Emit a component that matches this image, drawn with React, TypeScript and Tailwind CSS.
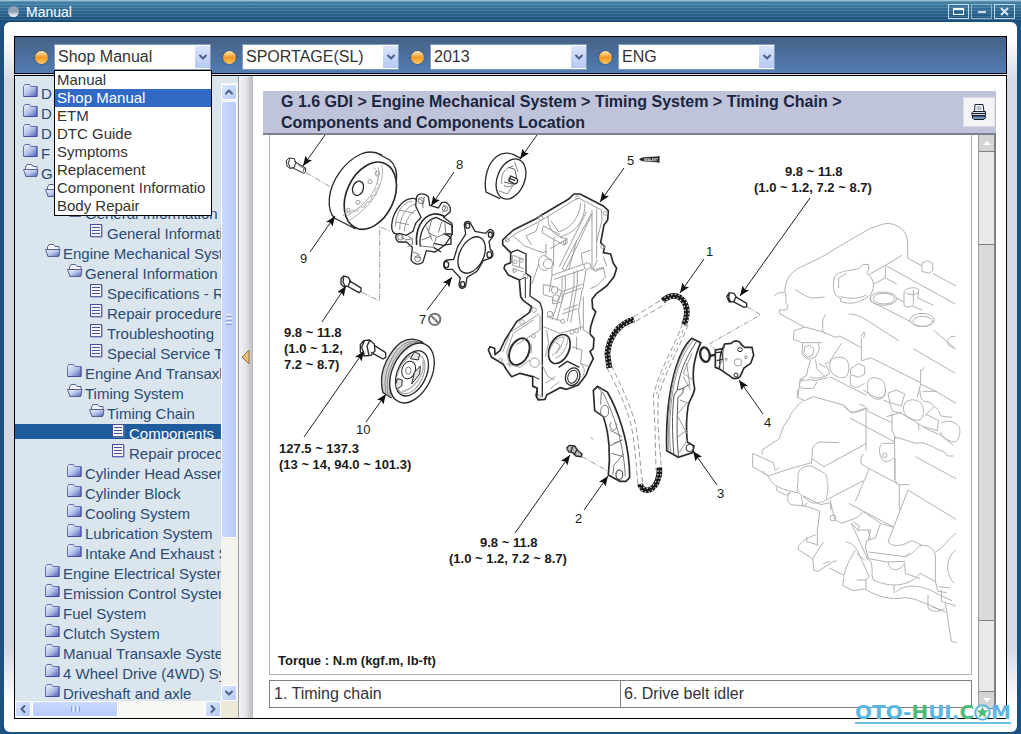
import { useState, type ReactNode } from "react";
import { ChevronDown, ChevronLeft, ChevronRight, ChevronUp } from "lucide-react";

type NodeKind = "folder" | "open" | "doc";

type TreeNode = {
  label: string;
  level: number;
  kind: NodeKind;
};

const TREE: TreeNode[] = [
  { label: "D", level: 0, kind: "folder" },
  { label: "D", level: 0, kind: "folder" },
  { label: "D", level: 0, kind: "folder" },
  { label: "F", level: 0, kind: "folder" },
  { label: "G", level: 0, kind: "open" },
  { label: "", level: 1, kind: "open" },
  { label: "General Information", level: 2, kind: "open" },
  { label: "General Information", level: 3, kind: "doc" },
  { label: "Engine Mechanical System", level: 1, kind: "open" },
  { label: "General Information", level: 2, kind: "open" },
  { label: "Specifications - Repair", level: 3, kind: "doc" },
  { label: "Repair procedures", level: 3, kind: "doc" },
  { label: "Troubleshooting", level: 3, kind: "doc" },
  { label: "Special Service Tools", level: 3, kind: "doc" },
  { label: "Engine And Transaxle", level: 2, kind: "folder" },
  { label: "Timing System", level: 2, kind: "open" },
  { label: "Timing Chain", level: 3, kind: "open" },
  { label: "Components", level: 4, kind: "doc" },
  { label: "Repair procedures", level: 4, kind: "doc" },
  { label: "Cylinder Head Assembly", level: 2, kind: "folder" },
  { label: "Cylinder Block", level: 2, kind: "folder" },
  { label: "Cooling System", level: 2, kind: "folder" },
  { label: "Lubrication System", level: 2, kind: "folder" },
  { label: "Intake And Exhaust System", level: 2, kind: "folder" },
  { label: "Engine Electrical System", level: 1, kind: "folder" },
  { label: "Emission Control System", level: 1, kind: "folder" },
  { label: "Fuel System", level: 1, kind: "folder" },
  { label: "Clutch System", level: 1, kind: "folder" },
  { label: "Manual Transaxle System", level: 1, kind: "folder" },
  { label: "4 Wheel Drive (4WD) System", level: 1, kind: "folder" },
  { label: "Driveshaft and axle", level: 1, kind: "folder" },
];

const INDENT = ["pl-2", "pl-[30px]", "pl-[52px]", "pl-[74px]", "pl-24"];

const MANUALS = [
  "Manual",
  "Shop Manual",
  "ETM",
  "DTC Guide",
  "Symptoms",
  "Replacement",
  "Component Informatio",
  "Body Repair",
];

function NodeIcon({ kind }: { kind: NodeKind }) {
  if (kind === "doc") {
    return (
      <svg width="18" height="16" viewBox="0 0 18 16" className="shrink-0" aria-hidden="true">
        <rect x="1.5" y=".5" width="11" height="12" fill="#f4f5fd" stroke="#4a4f9c" />
        <path d="M3 3.5h8M3 6.5h8M3 9.5h8" stroke="#4a4f9c" />
        <path d="M13 1v12H2" stroke="#7b80b8" fill="none" />
      </svg>
    );
  }
  if (kind === "open") {
    return (
      <svg width="18" height="16" viewBox="0 0 18 16" className="shrink-0" aria-hidden="true">
        <path d="M2.5 12V3L4 .5h4.5L10 2.5h4V12z" fill="#f3f6fc" stroke="#5a638f" />
        <path d="M.5 5.5h14.500L13.500 12.500H3z" fill="url(#folderFill)" stroke="#5a638f" />
      </svg>
    );
  }
  return (
    <svg width="18" height="16" viewBox="0 0 18 16" className="shrink-0" aria-hidden="true">
      <path d="M.5 12.500V2.500L2 .5h4.500l1.500 2h6v10z" fill="url(#folderFill)" stroke="#6570a8" />
      <path d="M14 2.500v10H1" fill="none" stroke="#4650a0" />
    </svg>
  );
}

function Bead() {
  return (
    <span className="size-[13px] shrink-0 rounded-full bg-linear-to-b from-[#ffe9a8] via-[#f39a1d] to-[#ffc65c] shadow-[0_0_2px_#2d3f5c]" />
  );
}

function Picker({ label, options, value, children, onClick }: {
  label: string;
  options: string[];
  value: string;
  children?: ReactNode;
  onClick?: () => void;
}) {
  return (
    <div className="flex items-center gap-[6px]">
      <Bead />
      <div className="relative w-[157px]" onClick={onClick}>
        <select
          aria-label={label}
          defaultValue={value}
          key={value}
          className="block h-[26px] w-full appearance-none border border-[#7f9db9] bg-white pl-[3px] text-base leading-6 text-[#333] outline-none"
        >
          {options.map((o) => (
            <option key={o}>{o}</option>
          ))}
        </select>
        <span className="pointer-events-none absolute top-[2px] right-px flex h-[22px] w-[15px] items-center justify-center bg-linear-to-b from-[#dbe5fd] to-[#b4c8f6]">
          <ChevronDown size={12} strokeWidth={4} color="#4d6185" />
        </span>
        {children}
      </div>
    </div>
  );
}

function ScrollButton({ label, children }: { label: string; children: ReactNode }) {
  return (
    <button
      type="button"
      aria-label={label}
      className="flex size-4 shrink-0 items-center justify-center rounded-[2px] border border-white bg-linear-to-br from-[#dce6fe] to-[#b5c9f8] text-[#4d6185]"
    >
      {children}
    </button>
  );
}

function Sidebar() {
  const [selected, setSelected] = useState(17);

  return (
    <aside className="flex w-[223px] shrink-0 flex-col overflow-hidden bg-[#dbe5ee] pt-[7px]">
      <div className="flex min-h-0 flex-1">
        <ul className="min-w-0 flex-1 overflow-hidden">
          {TREE.map((node, i) => (
            <li key={i} className="h-5 pt-px">
              <button
                type="button"
                onClick={() => setSelected(i)}
                className={`flex w-full items-start overflow-hidden text-left text-[15px] leading-5 whitespace-nowrap ${INDENT[node.level]} ${
                  i === selected ? "h-[15px] bg-[#1f5c9c] text-white" : "h-[19px] text-[#2a4a72]"
                }`}
              >
                <NodeIcon kind={node.kind} />
                <span>{node.label}</span>
              </button>
            </li>
          ))}
        </ul>
        <div className="flex w-[17px] shrink-0 flex-col bg-[#f4f3ee] pt-px">
          <ScrollButton label="Scroll up">
            <ChevronUp size={12} strokeWidth={4} />
          </ScrollButton>
          <div className="flex min-h-0 flex-1 flex-col py-px">
            <div className="flex h-3/4 w-4 flex-col items-center justify-center gap-px rounded-[2px] border border-white bg-linear-to-r from-[#cbd9fd] to-[#b6cbfb] shadow-[0_0_1px_#8fa8dc]">
              <span className="h-px w-[6px] bg-[#f0f4ff]" />
              <span className="h-px w-[6px] bg-[#8ca5e0]" />
              <span className="h-px w-[6px] bg-[#f0f4ff]" />
              <span className="h-px w-[6px] bg-[#8ca5e0]" />
              <span className="h-px w-[6px] bg-[#f0f4ff]" />
              <span className="h-px w-[6px] bg-[#8ca5e0]" />
            </div>
          </div>
          <ScrollButton label="Scroll down">
            <ChevronDown size={12} strokeWidth={4} />
          </ScrollButton>
        </div>
      </div>
      <div className="flex h-[17px] shrink-0">
        <div className="flex min-w-0 flex-1 bg-[#f8f7f3]">
          <ScrollButton label="Scroll left">
            <ChevronLeft size={12} strokeWidth={4} />
          </ScrollButton>
          <div className="flex-1 px-px">
            <div className="flex h-4 w-1/2 items-center justify-center gap-px rounded-[2px] border border-white bg-linear-to-b from-[#cbd9fd] to-[#b6cbfb] shadow-[0_0_1px_#8fa8dc]">
              <span className="h-[6px] w-px bg-[#8ca5e0]" />
              <span className="h-[6px] w-px bg-[#f0f4ff]" />
              <span className="h-[6px] w-px bg-[#8ca5e0]" />
              <span className="h-[6px] w-px bg-[#f0f4ff]" />
              <span className="h-[6px] w-px bg-[#8ca5e0]" />
            </div>
          </div>
          <ScrollButton label="Scroll right">
            <ChevronRight size={12} strokeWidth={4} />
          </ScrollButton>
        </div>
        <div className="w-[17px] shrink-0 bg-[#ece9d8]" />
      </div>
    </aside>
  );
}

// x1, y1 -> x2, y2 with the head on the second point
const ARROWS = [
  [325, 135, 303, 166],
  [454, 172, 431, 206],
  [310, 252, 335, 216],
  [322, 322, 346, 286],
  [427, 310, 452, 277],
  [537, 135, 520, 159],
  [624, 168, 600, 202],
  [704, 259, 680, 293],
  [366, 422, 386, 394],
  [304, 437, 364, 351],
  [584, 510, 608, 476],
  [717, 485, 693, 451],
  [763, 414, 739, 380],
  [810, 198, 740, 296],
  [515, 533, 570, 455],
];

const CALLOUTS: [number, number, string][] = [
  [456, 169, "8"],
  [300, 263, "9"],
  [419, 324, "7"],
  [627, 165, "5"],
  [706, 256, "1"],
  [356, 434, "10"],
  [575, 523, "2"],
  [717, 498, "3"],
  [764, 427, "4"],
];

const TORQUES: [number, number, string][] = [
  [284, 337, "9.8 ~ 11.8"],
  [284, 353, "(1.0 ~ 1.2,"],
  [284, 369, "7.2 ~ 8.7)"],
  [279, 453, "127.5 ~ 137.3"],
  [279, 469, "(13 ~ 14, 94.0 ~ 101.3)"],
  [785, 176, "9.8 ~ 11.8"],
  [754, 192, "(1.0 ~ 1.2, 7.2 ~ 8.7)"],
  [480, 547, "9.8 ~ 11.8"],
  [449, 563, "(1.0 ~ 1.2, 7.2 ~ 8.7)"],
  [278, 665, "Torque : N.m (kgf.m, lb-ft)"],
];

function PumpParts() {
  return (
    <g transform="translate(265 130) scale(.33333)" stroke="#2a2a2a" strokeWidth="3" fill="none">
      {/* pulley bolt */}
      <path d="M64 92l8-8 16 2 4 12-4 14-12 4-10-8zM74 86l-4 14 6 14M88 94l34 20v12l-6 4-36-18" fill="#fff" />
      <path d="M92 98l28 20M118 114l-4 12" stroke="#666" />
      {/* pulley */}
      <path d="M352 76C330 64 306 64 288 72C240 94 198 150 193 205C191 232 194 250 208 264L272 297M340 72L374 90C392 104 397 130 394 156" fill="#fff" strokeWidth="4" />
      <ellipse cx="316" cy="197" rx="71" ry="106" transform="rotate(25 316 197)" fill="#fff" strokeWidth="5" />
      <path d="M350 104C362 150 330 228 250 272M340 112C350 155 318 218 245 258M326 112l8 10-4 12 10 8-4 16 8 10-12 12 2 14-14 4-2 16-14 4-6 14-14-2-8 14-14-4-8 10-12-4-8 12" stroke="#b0b0b0" />
      <ellipse cx="279" cy="175" rx="16" ry="22" transform="rotate(20 279 175)" strokeWidth="4" />
      <g stroke="#999">
        <circle cx="315" cy="155" r="6" />
        <circle cx="279" cy="217" r="6" />
        <circle cx="250" cy="240" r="5" />
        <circle cx="338" cy="130" r="6" />
      </g>
      <path d="M123 128L195 170M290 487L344 513V290L378 305" stroke="#999" strokeDasharray="18 5 4 5" />
      {/* lower bolt */}
      <path d="M228 446l8-8 14 4 6 10-6 16-14 2-8-8zM236 442l-2 14 6 12M252 452l36 22v10l-6 4-36-20" fill="#fff" strokeWidth="4" />
      {/* water pump */}
      <path d="M450 206C418 200 384 240 380 285C379 302 385 312 396 312L450 330L500 260Z" fill="#fff" strokeWidth="4" />
      <path d="M442 214C412 214 392 252 391 290M454 222C424 226 404 262 404 300M464 236C440 240 420 270 418 304M402 240l46 10M392 276l40 8" stroke="#999" />
      <path d="M455 200C462 188 480 190 490 200L494 226L520 234L530 218C546 212 560 228 555 246L536 262L560 280L562 312L540 345L510 366L484 362L474 396C462 408 444 402 438 390L442 352L424 336L400 336C388 326 390 312 404 310L424 316L444 304L452 280L468 262L452 228Z" fill="#fff" strokeWidth="4" />
      <path d="M455 345C450 300 470 258 506 252C520 250 530 254 540 260" strokeWidth="5" />
      <path d="M466 350C460 310 482 268 514 262L562 286V312L540 312L558 322V342L534 346L506 340M506 352l22 14" strokeWidth="4" />
      <path d="M468 348l36 4 10-30 26-10M500 268l-10 40 24 12M484 290l18 42M470 330l30-12M530 276l-10 32M540 280l2 30M462 206l10 6 2 22M478 200l-4 24M534 224l8 10-10 14M444 366l20 8M450 380l18 4M408 320l14 10 20-4M428 318l14 8v18l-14 6" stroke="#777" />
      <circle cx="468" cy="212" r="9" stroke="#777" />
      <circle cx="540" cy="236" r="8" stroke="#777" />
      <circle cx="406" cy="322" r="8" stroke="#777" />
      <circle cx="458" cy="386" r="9" stroke="#777" />
      {/* gasket */}
      <path d="M598 285C598 272 614 270 618 282L630 304L662 310L672 300C682 294 690 308 684 320L672 334L676 358C688 366 686 384 672 386L655 392L636 424L606 442L602 468C596 480 582 476 582 462L586 444L562 418L544 418C532 412 534 394 546 390L566 388L578 350L602 312Z" fill="#fff" strokeWidth="4" />
      <ellipse cx="620" cy="375" rx="36" ry="58" transform="rotate(26 620 375)" strokeWidth="4" />
      <g strokeWidth="4">
        <ellipse cx="608" cy="287" rx="6" ry="8" />
        <ellipse cx="676" cy="314" rx="6" ry="8" />
        <ellipse cx="673" cy="374" rx="7" ry="9" />
        <ellipse cx="544" cy="404" rx="7" ry="9" />
        <ellipse cx="593" cy="463" rx="6" ry="8" />
      </g>
      <circle cx="509" cy="568" r="17" stroke="#777" strokeWidth="6" />
      <path d="M497 556l24 24" stroke="#777" strokeWidth="6" />
    </g>
  );
}

function CrankPulley() {
  return (
    <g transform="translate(265 310) scale(.33333)" stroke="#2a2a2a" strokeWidth="3" fill="none">
      <path d="M286 104l10-12 18-2 14 12 2 20-12 14-20 2-12-12zM298 92l-8 20 8 22M314 92l-8 16 6 28M328 106l34 22v14l-8 5-36-20" fill="#fff" strokeWidth="4" />
      <path d="M475 98C440 78 408 88 382 124C352 165 344 210 354 248L380 264" fill="#d4d4d4" strokeWidth="4" />
      <path d="M468 98C436 88 412 98 390 130C364 168 354 214 364 254M460 100C434 94 416 106 396 136C372 172 360 216 370 258M452 104C432 100 418 114 402 140C380 176 366 220 376 262" stroke="#888" />
      <ellipse cx="441" cy="189" rx="59" ry="95" transform="rotate(25 441 189)" fill="#fff" strokeWidth="4" />
      <ellipse cx="441" cy="190" rx="43" ry="72" transform="rotate(25 441 190)" strokeWidth="4" />
      <ellipse cx="437" cy="192" rx="37" ry="63" transform="rotate(25 437 192)" stroke="#999" />
      <ellipse cx="431" cy="180" rx="20" ry="27" transform="rotate(20 431 180)" fill="#fff" />
      <ellipse cx="430" cy="182" rx="8" ry="11" stroke="#777" />
      <path d="M436 146l24 4 4-18-16-6zM440 222l8-34 18-20-2 24zM398 236l12-8 2-18-14-4-6 16" fill="#e4e4e4" strokeWidth="3" />
      <path d="M474 150C482 190 450 236 410 246" stroke="#bbb" strokeWidth="5" />
    </g>
  );
}

function FrontCover() {
  return (
    <g transform="translate(480 130) scale(.33333)" stroke="#2a2a2a" strokeWidth="3" fill="none">
      {/* idler */}
      <path d="M112 80C92 66 68 66 52 78C24 98 10 144 18 186L60 206M98 72L124 86" strokeWidth="4" fill="#fff" />
      <ellipse cx="93" cy="147" rx="41" ry="63" transform="rotate(22 93 147)" fill="#fff" strokeWidth="4" />
      <path d="M66 162C60 136 74 112 100 108M72 166C88 178 104 164 110 148M104 96l10 30M56 182l26 10 20-30" stroke="#888" />
      <path d="M86 112l18 6 6 24-14 20-24-6" stroke="#555" />
      <path d="M86 144l20 8M92 138l18 8c6 6 2 16-6 16l-18-10z" strokeWidth="4" fill="#fff" />
      {/* cover outline */}
      <path
        d="M68 330L80 318L100 300L165 268L185 255L265 208L282 192L300 192L370 228L385 242L383 270L372 285L362 338L374 350L370 368L392 372L400 400L410 415L402 440L380 468L350 490L336 508L338 535L347 545L340 565L332 590L330 612L342 625L340 655L330 665L340 685L328 710L318 735L295 765L260 778L240 773L200 795L195 808L175 810L168 797L172 775L158 768L158 740L120 730L95 740L80 720L70 703L35 682L25 660L30 650L44 655L45 674L60 662L75 630L110 575L148 548L155 530L130 512L122 500L118 450L85 435L72 415L75 405L92 398L92 368L82 358L68 344Z"
        fill="#fff"
        strokeWidth="5"
        strokeLinejoin="round"
      />
      <path d="M92 368l20-8 26 12v58l14 10-2 58 30 20 7 22v260" strokeWidth="4" />
      <path d="M158 770l14 4v34M118 450l18-8v62M158 738l20 10" />
      <ellipse cx="118" cy="665" rx="28" ry="42" transform="rotate(25 118 665)" strokeWidth="6" />
      <ellipse cx="238" cy="657" rx="29" ry="46" transform="rotate(25 238 657)" strokeWidth="5" />
      <ellipse cx="278" cy="740" rx="21" ry="27" transform="rotate(20 278 740)" strokeWidth="4" />
      <ellipse cx="278" cy="740" rx="14" ry="20" transform="rotate(20 278 740)" />
      <path d="M236 712l26-18 36 18" strokeWidth="4" />
      <g stroke="#a0a0a0">
        <path d="M76 334L108 310L176 276L280 212L296 204L364 240L366 270L350 336M205 258C200 280 214 310 240 320C290 310 318 262 314 220M212 272l24 34c40-14 62-44 66-86M240 322l20 4-6 20-44-24-24-14 4-20 50 26M100 318l34 30 54 20 12-4M176 280l-8 24-30 14 16 26" />
        <path d="M320 244l-82 166M334 250l-88 166 10 6 80-170M336 240v180M350 236v150M222 320l-2 90M198 342v34M290 330l-24 90M210 356l54-30" />
        <circle cx="204" cy="402" r="14" />
        <path d="M196 376c-14 0-22 10-20 26s14 22 26 18M194 378l22 12M216 410v26M176 402l-20 60" />
        <circle cx="322" cy="408" r="10" />
        <path d="M216 436l96-34M222 448l90-30M216 436l-8 50M334 414l12 10 26-10M246 440v40l-30 90M256 436v40l-26 96M282 424v40l-20 110M292 420v40l-20 118M318 420l-10 60M250 484l58-22M250 494l54-20M250 540l44-16M246 552l46-16M306 480l-10 60 6 60M308 400l-4-30 28-10" />
        <circle cx="224" cy="480" r="10" />
        <circle cx="228" cy="504" r="10" />
        <path d="M190 464l34 6M190 464v30l28 8v20l28-6M234 476l12 8v28" />
        <circle cx="210" cy="552" r="8" />
        <circle cx="248" cy="574" r="6" />
        <circle cx="276" cy="606" r="6" />
        <circle cx="290" cy="602" r="6" />
        <path d="M200 560l44 12M190 590l50 20 70-20M310 500v100l20 12M200 600l6 40-10 40M276 650l30 10-4 40 24 10M290 620v40M300 700c16 10 16 30 6 40" />
        <circle cx="126" cy="576" r="7" />
        <circle cx="162" cy="540" r="7" />
        <circle cx="160" cy="618" r="6" />
        <circle cx="136" cy="440" r="7" />
        <circle cx="62" cy="690" r="5" />
        <circle cx="164" cy="698" r="14" />
        <path d="M172 550l8 10v40l-70 44M172 556l-80 50-24 60M160 570l-60 40-20 56 10 46M150 690l-30 22-40-10M154 640v30M98 376v30l34 10M98 376l34 12M118 382v30M98 416l34 10M100 430v-14M184 700l20 40 20 10M196 760l30-20M212 776l26-22" />
        <circle cx="106" cy="396" r="5" />
        <circle cx="124" cy="392" r="5" />
        <circle cx="104" cy="422" r="5" />
        <path d="M210 660c6-20 20-36 40-40M216 676c20-10 34-32 36-56M226 684c20-6 36-30 38-60M226 636l14 10-10 24" />
        <circle cx="376" cy="250" r="6" />
        <circle cx="182" cy="264" r="7" />
        <circle cx="82" cy="330" r="6" />
        <circle cx="292" cy="202" r="5" />
        <circle cx="368" cy="350" r="6" />
        <circle cx="256" cy="336" r="6" />
        <circle cx="178" cy="800" r="5" />
        <path d="M340 420l30-8 6 30-26 26-20 8M370 380l10 28M352 390l-12 26" />
      </g>
      {/* sealant tube */}
      <path d="M478 88l6-4 10-2 36-2 8-2v20l-8-2-36-2-10-2z" fill="#222" strokeWidth="1" />
      <text x="491" y="92" fontSize="9" fontWeight="700" fill="#eee" stroke="none">SEALANT</text>
    </g>
  );
}

function ChainParts() {
  return (
    <g transform="translate(540 280) scale(.33333)" stroke="#2a2a2a" strokeWidth="3" fill="none">
      <g stroke="#999" strokeDasharray="16 9">
        <path d="M282 110L368 57M288 124L376 72M200 262C236 330 258 380 272 430C286 490 288 560 294 612M214 256C250 330 272 380 286 430C298 490 300 560 308 608" />
        <path d="M428 130C404 200 356 270 340 350L345 440L348 570M444 134C416 210 372 280 354 356L354 440L364 562" />
        <path d="M436 132C410 206 362 276 348 352" strokeDasharray="8 12" />
      </g>
      <g stroke="#1a1a1a" strokeWidth="17">
        <path d="M368 62C398 38 428 44 439 82C443 102 440 116 432 134" />
        <path d="M282 118C236 132 206 170 202 222L208 264" />
        <path d="M300 612C306 634 330 640 348 612C356 596 360 580 358 562" />
      </g>
      <g stroke="#ddd" strokeWidth="4" strokeDasharray="4 7">
        <path d="M370 66C398 44 424 50 434 82C438 102 436 116 428 134" />
        <path d="M368 56C400 34 434 38 444 82C448 102 446 116 438 134" strokeDashoffset="5" />
        <path d="M282 122C240 136 212 172 207 222L212 264" />
        <path d="M280 112C232 128 200 168 197 222L203 264" strokeDashoffset="5" />
        <path d="M304 612C310 628 328 632 344 610C352 596 356 580 354 562" />
        <path d="M296 616C302 640 332 646 352 616C360 600 364 584 362 562" strokeDashoffset="5" />
      </g>
      {/* tensioner arm */}
      <path d="M455 175L482 188C464 230 454 282 464 326C462 348 446 360 444 380C438 420 438 450 442 486L462 498L458 518L415 532L380 512C378 430 384 340 408 262C422 215 438 190 455 175Z" fill="#fff" strokeWidth="5" />
      <path d="M470 184C432 240 416 290 412 330L402 346C396 400 396 460 402 526M412 330l20-6 14-10M430 324l-2 16-14 12C412 400 408 470 416 530" stroke="#555" />
      <path d="M460 180C420 230 404 290 396 350C390 400 386 460 392 516M450 184C414 230 398 300 392 350C386 400 384 450 386 512M456 220l-26 60 28 20M430 290l22 40M420 360l26 10M414 400l26-30M414 410l26 50M414 470l28-20M416 520l26-40M440 250l10 70" stroke="#999" />
      <circle cx="449" cy="504" r="11" fill="#fff" />
      {/* chain guide */}
      <path d="M160 332L172 319L202 336C234 392 262 474 268 560L269 592L258 604L240 604L205 585C212 530 208 460 190 410L164 392Z" fill="#fff" strokeWidth="5" />
      <path d="M172 322l12 12-2 40M188 336C220 400 250 480 256 590M196 376c12 0 14 30 2 34s-18-8-16-18 6-16 14-16M214 426c-8 6-4 22 6 24s12-16 6-22M210 450l36 20M220 490l28-10M214 520l36 10M218 560l34-40M222 560l-4 24M206 500l40-20" stroke="#777" />
      <ellipse cx="238" cy="584" rx="10" ry="14" fill="#fff" />
      <path d="M80 504l8-8 16 2 10 14 12 10-2 8-16-2-10-10-12-2zM98 500l-6 16M110 510l-6 12" fill="#bbb" strokeWidth="4" />
      <path d="M126 530L205 574M620 80L662 104L508 192L526 208" stroke="#999" strokeDasharray="16 5 4 5" />
      <path d="M152 472l8 6" stroke="#999" />
      {/* tensioner */}
      <ellipse cx="495" cy="224" rx="14" ry="22" transform="rotate(-12 495 224)" strokeWidth="7" />
      <path d="M508 228l20-4" strokeWidth="7" />
      <path d="M526 210L548 206L554 192L574 190C584 178 600 182 604 194L614 202L636 202L641 226L632 250L612 264L600 290C592 298 578 298 570 288L540 268L526 262L526 236Z" fill="#fff" strokeWidth="5" />
      <path d="M526 218l20-2 2 22-18 4M548 206c-12 20-6 40-10 60" strokeWidth="4" />
      <path d="M554 200c-10 20-2 44-4 70M548 240l-12 20" stroke="#777" />
      <circle cx="594" cy="247" r="11" stroke="#999" />
      <ellipse cx="600" cy="209" rx="7" ry="6" />
      <circle cx="588" cy="285" r="6" />
      <circle cx="558" cy="238" r="3" stroke="#888" />
      <circle cx="618" cy="232" r="4" stroke="#888" />
      <path d="M560 50l8-12 14 2 6 10-6 14-14 2zM568 40l-2 14 6 12M586 50l34 20v10l-8 2-34-18" fill="#fff" strokeWidth="4" />
    </g>
  );
}

function EngineBlock() {
  return (
    <g fill="none" stroke="#b2b2b2" strokeWidth="3" strokeLinejoin="round">
      <g transform="translate(720 130) scale(.33333)">
        <path d="M162 498l10-8 22-4C196 450 210 428 240 412L300 384L400 324L455 293C475 290 485 280 505 280C535 284 562 300 563 340V384L606 408M196 488C200 510 194 520 204 526L200 540H178V550L250 590L310 606L345 622L360 618L422 652" />
        <path d="M225 478C245 488 262 506 284 504L314 501M344 440C336 470 340 500 362 504V514C385 524 410 520 432 508L452 494C466 470 462 444 440 430L446 418V404L430 403L416 416L384 422C366 424 350 432 344 440Z" />
        <path d="M356 474V444L380 430M362 500C390 508 420 506 440 494M446 434L496 406L546 376M496 406L706 522M496 410V444L460 462M496 444l34 18M606 400l16-8 16 8v22l-12 8-20-6zM638 430L708 468" />
        <ellipse cx="490" cy="506" rx="40" ry="20" />
        <ellipse cx="492" cy="506" rx="32" ry="16" />
        <ellipse cx="606" cy="570" rx="36" ry="20" />
        <ellipse cx="608" cy="574" rx="29" ry="15" />
        <path d="M452 500v14L570 574M640 600L706 656M530 504l22 12M552 486v40l10 6 14-4 30 12M552 486c6-14 34-16 44-8l-2 26 46 22M580 480v46M556 488c10 8 30 8 40-2M706 620c-20-6-28 14-20 26l20 10M386 552c24 0 40 10 60 22l90 58M580 656L706 730M318 552l-10 16v32l8 12" />
        <path d="M252 592l-30 10-2 26 26 10h60M422 620l10-14M432 606c4 10 2 16-8 20v66M248 640l-2 34 18 14 22-6 12-24-4-22M254 650l14-4 14 10-4 20-16 6-10-10zM272 690l-8 24-4 22-20 12-6 54M286 688l6 30 24 22M364 640l-36 56-14 6M270 740c10 8 40 6 60-10l-12-26M240 750c12 4 26-4 46 2l40-10M296 700l20 12M250 745c-20 20-10 30 0 30h30l12-20" />
        <path d="M334 690c8-10 34-12 46 0 10 14 8 40-2 50-14 10-40-4-46-18-4-12-4-24 2-32zM392 716l24-16 18 10v22l-18 10-24-8zM390 736l2 30 18 8 24-14M446 750c10-12 36-8 46 8 8 20 4 44-8 48-18 6-36-6-40-22-2-12-4-26 2-34zM424 692l30-8 148 74M602 718v44l50 24M604 722l10-10M330 740l50 26 60 30M602 762l-10 40" />
      </g>
      <g transform="translate(740 390) scale(.33333)">
        <path d="M172 0v22l22 10 26-12 94 26 20 24 44-16V182M190 30c-20 20-40 40-40 50l-20 30-12 36-52 34v14M38 190l62 28 6 24 12-10M38 190v40l46 28 60-20 70-20" />
        <path d="M358 44c16 0 24 10 26 20l72 34M310 48C330 72 350 70 376 56M330 84l134 72M66 242l20 18C90 280 120 300 174 308M110 290v12l30 14 10-10M150 308c-10 10-10 30 4 36l40 4 8-10" />
        <path d="M174 260c0-20 14-34 40-32l40 22c12 10 4 24 10 36 2 20-6 30-4 42-14 12-34 14-50 8l-30-24c-14-10-4-30-6-52z" />
        <path d="M214 222C220 180 210 164 240 156l58 2M216 206l36 24L380 160M262 328L370 272M184 320l4 26 50 16M190 318l52 26 30-6v22M270 330l14 58 20 12 44-16 24-20M326 340l136 72M346 334L388 236L478 284M388 236l-24-14c-4-10 0-24 6-30M478 284h30M478 286V362M444 456L504 300L648 388M240 362l-8 60v40" />
        <circle cx="279" cy="384" r="9" />
        <circle cx="434" cy="196" r="7" />
        <path d="M464 140l-1 20h-36c-14 8-10 44 6 54 16 4 20-8 32-10V272L478 286M456 70v50l12 26M464 160v110" />
        <path d="M370 0c20 14 44 30 60 20 8-8 8-16 4-22M444 10l24-10 26 12-10 36-34-10zM430 30l18 8 10 26 30 6M494 40c10-14 36-14 50 0 10 16 8 40-4 50-20 4-44-10-48-24-2-10-2-18 2-26zM552 80l30-30c14 4 16 18 20 28l34 4M560 74l36 18-4 30-42-12M604 100c16-12 44-6 54 12 6 20-4 44-16 44-20-4-38-14-40-30M536 100v20M440 80l40-12 90 54 30 12 40 32M540 0c0 30 12 40 24 34l18 14M548 4h40l60 36" />
        <path d="M464 142c20 0 40 14 66 18 26-8 50 16 84 26l10 12h16M526 200L648 266" />
        <path d="M228 434c-30 10-60 30-52 46l42 26 32-50M200 440v14l36 12M218 506l4 36 12 2 44-28 12-4M250 520l20-6M268 534l44 22M312 556c10-40 20-50 34-76M312 560l-4 26 30 16 40-6V570h-28M318 456c16 4 26 8 36 30l34 74-12 10M350 490l24 20" />
        <path d="M334 400l50 110M334 400l22 22M340 396l18 12-6 16M372 366l50 34-16 44-26 8-4 20 10 36M384 420l8 30M356 420h36l-8 32M422 400l40 12M386 486l110 14 14-12M386 506l56 10 54-2M496 500c20-6 30-20 40-30 18-10 44 0 50 24v80M388 510c14 10 4 50 12 60 50 24 110 20 140-20l46 24M444 516c4 30 34 30 50 4l2 30 44 16M444 456c20 20 50 8 72-4l30 14M586 486c20-10 40-40 62-56" />
        <path d="M376 598c40 24 80 32 110 26 30-4 50 10 76 18l42 20M462 586v24M466 606c40-30 80-14 100-8l40 20 30 14M648 480c-30 20-34 70-6 100M586 574l8 30 26 4M596 590l34 4M604 600v34l44 14M564 614v40c14 14 40 12 50 0M576 650l40 16M616 640l10 64 8 50 16 4" />
      </g>
    </g>
  );
}

function Diagram() {
  return (
    <svg viewBox="270 135 701 539" className="block h-auto w-full" role="img" aria-label="Timing chain components" fontFamily='"Liberation Sans", Arial, sans-serif'>
      <defs>
        <marker id="arrow" markerUnits="userSpaceOnUse" markerWidth="12" markerHeight="10" refX="10" refY="4" orient="auto">
          <path d="M0 0L10 4L0 8L2 4Z" fill="#111" />
        </marker>
      </defs>
      <EngineBlock />
      <PumpParts />
      <CrankPulley />
      <FrontCover />
      <ChainParts />
      {ARROWS.map(([x1, y1, x2, y2]) => (
        <line key={`${x1}-${y1}`} x1={x1} y1={y1} x2={x2} y2={y2} stroke="#222" strokeWidth="1" markerEnd="url(#arrow)" />
      ))}
      <g fontSize="13" fill="#1a1a1a">
        {CALLOUTS.map(([x, y, text]) => (
          <text key={text} x={x} y={y}>{text}</text>
        ))}
        <g fontWeight="700">
          {TORQUES.map(([x, y, text]) => (
            <text key={`${x}-${y}`} x={x} y={y}>{text}</text>
          ))}
        </g>
      </g>
    </svg>
  );
}

function DocumentPane() {
  return (
    <main className="flex min-w-0 flex-1 flex-col bg-white px-[10px] pt-[15px] pb-[9px]">
      <header className="flex shrink-0 items-start justify-between border-b-2 border-[#7d7f92] bg-[#bfc4da] pl-[18px]">
        <h1 className="max-w-[600px] text-base leading-[21px] font-bold text-[#1b2540]">
          G 1.6 GDI &gt; Engine Mechanical System &gt; Timing System &gt; Timing Chain &gt; Components and Components Location
        </h1>
        <button type="button" aria-label="Print" className="mt-[6px] mr-px flex h-[30px] w-8 shrink-0 items-center justify-center border border-[#dcdde6] bg-[#f4f4f6]">
          <svg width="16" height="16" viewBox="0 0 16 16" aria-hidden="true">
            <path d="M3.500 7.500L4 .5h8l1 7z" fill="#fff" stroke="#1a2030" />
            <path d="M5.500 3h5M5.500 5h5" stroke="#6c86a8" />
            <path d="M2 7.500h12.500v4H1v-3z" fill="#d8dce4" stroke="#1a2030" />
            <path d="M1 9.500h14" stroke="#1a2030" />
            <path d="M1.500 12h13v1.500L13 15.500H3L1.500 14z" fill="#6f95b8" stroke="#1a2030" />
          </svg>
        </button>
      </header>
      <div className="flex min-h-0 flex-1">
        <div className="min-w-0 flex-1 overflow-hidden px-[6px]">
          <div className="border border-t-0 border-[#b4b4b4]">
            <Diagram />
          </div>
          <table className="mt-[5px] w-full border-collapse text-base leading-[26px] text-[#333340]">
            <tbody>
              <tr>
                <td className="w-1/2 border border-[#808080] px-1">1. Timing chain</td>
                <td className="border border-[#808080] px-[3px]">6. Drive belt idler</td>
              </tr>
            </tbody>
          </table>
        </div>
        <div className="flex w-[18px] shrink-0 flex-col border-r-2 border-l border-r-[#808080] border-l-[#9a9a9a] bg-[#e9e9e9]">
          <button type="button" aria-label="Scroll document up" className="flex h-[17px] shrink-0 items-center justify-center border-b border-[#808080] bg-[#d4d4d4]">
            <span className="border-x-4 border-b-4 border-x-transparent border-b-white" />
          </button>
          <div className="flex min-h-0 flex-1 flex-col">
            <div className="h-[17%] shrink-0" />
            <div className="h-[70%] shrink-0 border-y border-[#808080] bg-[#dadada]" />
          </div>
          <button type="button" aria-label="Scroll document down" className="flex h-[18px] shrink-0 items-center justify-center border-y border-[#808080] bg-[#d4d4d4]">
            <span className="border-x-4 border-t-4 border-x-transparent border-t-white" />
          </button>
        </div>
      </div>
    </main>
  );
}

function TitleBar() {
  return (
    <div className="flex h-[22px] shrink-0 items-center justify-between border-t border-[#9cc3d8] bg-[repeating-linear-gradient(to_bottom,rgba(255,255,255,0.14)_0_1px,transparent_1px_3px),linear-gradient(to_bottom,#4784a8,#2b658f_50%,#174c78)] pr-[6px] pl-2">
      <div className="flex items-center gap-[7px] text-sm text-white">
        <span className="size-[11px] rounded-full bg-linear-to-b from-[#8fa3b5] via-[#8fa3b5] to-white" />
        <span>Manual</span>
      </div>
      <div className="flex gap-[2px]">
        <button type="button" aria-label="Maximize" className="flex h-[15px] w-[21px] items-center justify-center border border-[#c6dbe8]">
          <span className="h-[7px] w-[11px] border border-t-2 border-white" />
        </button>
        <button type="button" aria-label="Minimize" className="flex h-[15px] w-[21px] items-center justify-center border border-[#8fb5cc]">
          <span className="h-[2px] w-2 bg-[#c9dfec]" />
        </button>
        <button type="button" aria-label="Close" className="flex h-[15px] w-[21px] items-center justify-center border border-[#c6dbe8]">
          <svg width="9" height="9" viewBox="0 0 9 9" aria-hidden="true">
            <path d="M1 1l7 7M8 1L1 8" stroke="#d8e8f2" strokeWidth="2" />
          </svg>
        </button>
      </div>
    </div>
  );
}

function Watermark() {
  return (
    <div className="pointer-events-none absolute right-[10px] bottom-[10px] flex items-center border-b-2 border-[#6cc0e8] font-['DejaVu_Sans',sans-serif] text-xl leading-[19px] font-bold text-[#5db6e2]">
      <span>OTO-</span>
      <span className="text-[#4cba78]">H</span>
      <span>UI.</span>
      <span className="text-[#4cba78]">C</span>
      <svg width="17" height="17" viewBox="0 0 17 17" aria-hidden="true">
        <circle cx="8.500" cy="8.500" r="7.300" fill="#e8f3f0" stroke="#5db6e2" strokeWidth="2" />
        <path d="M8.500 2.500l1.600 4h4.200l-3.300 2.700 1.200 4.300-3.700-2.500-3.700 2.500 1.200-4.300-3.300-2.700h4.200z" fill="#4cba78" />
      </svg>
      <span>M</span>
    </div>
  );
}

export default function App() {
  const [manual, setManual] = useState("Shop Manual");
  const [open, setOpen] = useState(true);

  return (
    <div className="relative flex h-screen flex-col overflow-hidden bg-[#1b5280] font-['Liberation_Sans',Arial,sans-serif]">
      <svg width="0" height="0" className="absolute" aria-hidden="true">
        <linearGradient id="folderFill" x1="0" y1="0" x2="1" y2="1">
          <stop offset="0" stopColor="#f1f5fd" />
          <stop offset=".5" stopColor="#b7c4ea" />
          <stop offset="1" stopColor="#4a5ab4" />
        </linearGradient>
      </svg>
      <TitleBar />
      <div className="mx-1 mb-[2px] flex min-h-0 flex-1 flex-col gap-px rounded-md bg-[linear-gradient(to_bottom,#fff_14px,#d5d9e4_60px,#d5d9e4_88%,#fff_96%)] px-[10px] pt-[14px] pb-[13px]">
        <div className="flex h-[38px] shrink-0 items-start gap-3 border border-black bg-linear-to-b from-[#466184] to-[#527db4] pt-[7px] pl-5">
          <Picker label="Manual type" options={MANUALS} value={manual} onClick={() => setOpen(!open)}>
            {open && (
              <ul className="absolute top-full left-0 z-10 w-[158px] border border-black bg-white text-[15px] leading-[18px] text-[#333]">
                {MANUALS.map((m) => (
                  <li key={m}>
                    <button
                      type="button"
                      onClick={() => setManual(m)}
                      className={`block w-full overflow-hidden pl-[2px] text-left whitespace-nowrap ${m === manual ? "bg-[#316ac5] text-white" : ""}`}
                    >
                      {m}
                    </button>
                  </li>
                ))}
              </ul>
            )}
          </Picker>
          <Picker label="Model" options={["SPORTAGE(SL)"]} value="SPORTAGE(SL)" />
          <Picker label="Year" options={["2013"]} value="2013" />
          <Picker label="Language" options={["ENG"]} value="ENG" />
        </div>
        <div className="flex min-h-0 flex-1 border border-black bg-white">
          <Sidebar />
          <div className="flex w-[15px] shrink-0 items-center justify-start border-l border-[#9a9ca4] bg-linear-to-r from-[#f4f4f8] via-[#e4e4e8] to-[#b9b9bd]">
            <button type="button" aria-label="Collapse contents" className="-mt-20 ml-[2px]">
              <svg width="9" height="16" viewBox="0 0 9 16" aria-hidden="true">
                <path d="M8 1v14L1 8z" fill="#f0bd6c" stroke="#8a7350" />
              </svg>
            </button>
          </div>
          <DocumentPane />
        </div>
      </div>
      <Watermark />
    </div>
  );
}
